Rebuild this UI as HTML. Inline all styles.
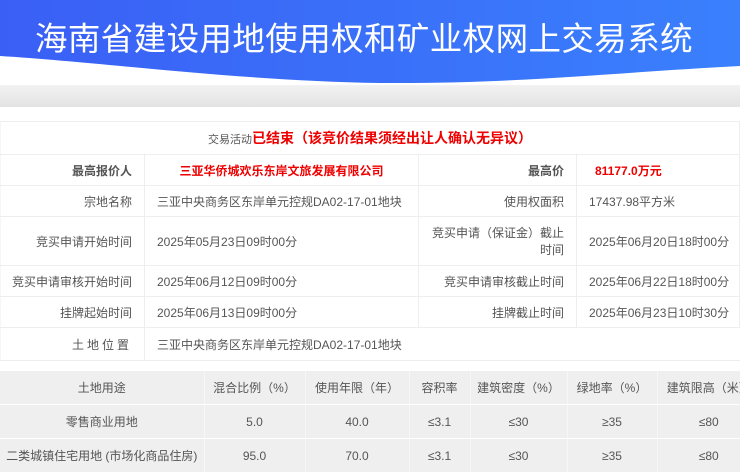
<!DOCTYPE html><html><head><meta charset="utf-8"><style>
*{margin:0;padding:0;box-sizing:border-box}
body{width:740px;height:475px;overflow:hidden;background:#fff;font-family:"Liberation Sans","Noto Sans CJK SC",sans-serif;font-size:12px;color:#555;position:relative}
svg.h{position:absolute;left:0;top:0}
.title{position:absolute;left:35px;top:13px;font-size:32.5px;color:#fff;letter-spacing:0.4px;font-family:"Noto Sans CJK SC",sans-serif;white-space:nowrap}
.bar{position:absolute;left:0;top:85px;width:740px;height:22px;background:linear-gradient(#f2f2f2,#e3e3e3)}
table{position:absolute;border-collapse:collapse;left:0}
td{border:1px solid #eee;height:31px}
.t1{top:121px;width:740px}
.t1 tr td:first-child{border-left:1px solid #f6f6f6}
.r{text-align:right;padding-right:12px}
.l{padding-left:12px}
.red{color:#e00;font-weight:bold}
.t2{top:370px;width:760px;background:#efefef}
.t2 td{text-align:center;height:34px;border:1px solid #fff;border-width:1px 0 1px 0}
.t2 tr td+td{border-left:1px solid #f7f7f7}
</style></head><body>
<svg class="h" width="740" height="90"><defs><linearGradient id="g" x1="0" x2="1"><stop offset="0" stop-color="#3a5ff5"/><stop offset="1" stop-color="#3a80fd"/></linearGradient></defs><path d="M0 0H740V66C620,72 520,84 380,83C240,81 100,62 0,56Z" fill="url(#g)"/></svg>
<div class="title">海南省建设用地使用权和矿业权网上交易系统</div>
<div class="bar"></div>
<table class="t1">
<tr><td colspan="4" style="text-align:center;height:33px;font-size:11px"><b style="font-weight:normal">交易活动</b><span class="red" style="font-size:14px">已结束（该竞价结果须经出让人确认无异议）</span></td></tr>
<tr><td class="r" style="width:144px"><b>最高报价人</b></td><td style="width:274px;text-align:center" class="red">三亚华侨城欢乐东岸文旅发展有限公司</td><td class="r" style="width:158px"><b>最高价</b></td><td class="red l" style="padding-left:18px">81177.0万元</td></tr>
<tr><td class="r">宗地名称</td><td class="l">三亚中央商务区东岸单元控规DA02-17-01地块</td><td class="r">使用权面积</td><td class="l">17437.98平方米</td></tr>
<tr><td class="r" style="height:49px">竞买申请开始时间</td><td class="l">2025年05月23日09时00分</td><td class="r">竞买申请（保证金）截止<br>时间</td><td class="l">2025年06月20日18时00分</td></tr>
<tr><td class="r">竞买申请审核开始时间</td><td class="l">2025年06月12日09时00分</td><td class="r">竞买申请审核截止时间</td><td class="l">2025年06月22日18时00分</td></tr>
<tr><td class="r">挂牌起始时间</td><td class="l">2025年06月13日09时00分</td><td class="r">挂牌截止时间</td><td class="l">2025年06月23日10时30分</td></tr>
<tr><td class="r" style="letter-spacing:3px;height:33px">土地位置</td><td class="l" colspan="3" style="border-right:none">三亚中央商务区东岸单元控规DA02-17-01地块</td></tr>
</table>
<table class="t2">
<tr><td style="width:204px">土地用途</td><td style="width:101px">混合比例（%）</td><td style="width:104px">使用年限（年）</td><td style="width:61px">容积率</td><td style="width:97px">建筑密度（%）</td><td style="width:90px">绿地率（%）</td><td>建筑限高（米）</td></tr>
<tr><td>零售商业用地</td><td>5.0</td><td>40.0</td><td>≤3.1</td><td>≤30</td><td>≥35</td><td>≤80</td></tr>
<tr><td>二类城镇住宅用地 (市场化商品住房)</td><td>95.0</td><td>70.0</td><td>≤3.1</td><td>≤30</td><td>≥35</td><td>≤80</td></tr>
</table>
</body></html>
